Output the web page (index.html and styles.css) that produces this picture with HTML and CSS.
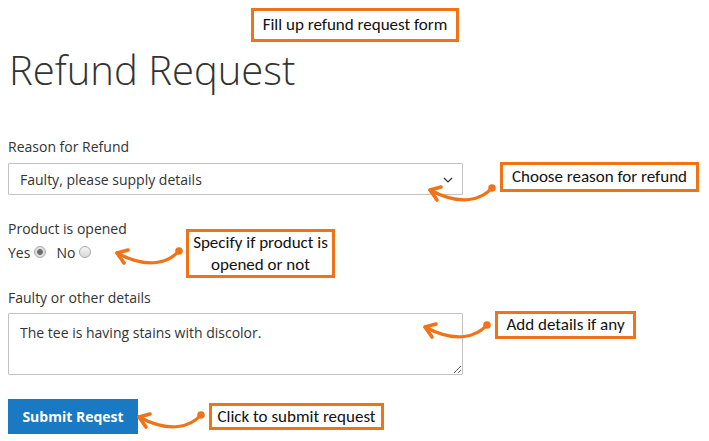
FILE: index.html
```html
<!DOCTYPE html>
<html lang="en">
<head>
    <meta charset="UTF-8">
    <meta name="viewport" content="width=device-width, initial-scale=1.0">
    <title>Refund Request</title>
    <link rel="stylesheet" href="styles.css">
</head>
<body>

    <div class="page">
        <h1 class="page-title">Refund Request</h1>

        <form class="refund-form">
            <label class="field-label" for="reason">Reason for Refund</label>
            <div class="select-wrap">
                <select id="reason" class="field-select">
                    <option>Faulty, please supply details</option>
                    <option>Wrong size</option>
                    <option>Changed my mind</option>
                </select>
                <svg class="select-arrow" width="10" height="6" viewBox="0 0 10 6">
                    <path d="M1 1 L5 5 L9 1" fill="none" stroke="#333" stroke-width="1.2"/>
                </svg>
            </div>

            <div class="field-label label-opened">Product is opened</div>
            <div class="radio-row">
                <label class="radio-item">Yes <input type="radio" name="opened" value="yes" checked></label>
                <label class="radio-item">No <input type="radio" name="opened" value="no"></label>
            </div>

            <label class="field-label label-details" for="details">Faulty or other details</label>
            <textarea id="details" class="field-textarea">The tee is having stains with discolor.</textarea>

            <button type="button" class="submit-btn">Submit Reqest</button>
        </form>

        <!-- annotation layer -->
        <div class="note note-top">Fill up refund request form</div>
        <div class="note note-reason">Choose reason for refund</div>
        <div class="note note-opened">Specify if product is<br>opened or not</div>
        <div class="note note-details">Add details if any</div>
        <div class="note note-submit">Click to submit request</div>

        <svg class="arrows" width="709" height="441" viewBox="0 0 709 441">
            <defs>
                <g id="arrow">
                    <path d="M0 0 C-10 11 -30 19 -62 2" fill="none" stroke="#f07318" stroke-width="3.2" stroke-linecap="round"/>
                    <path d="M-51 -1 L-62 2 L-55 12" fill="none" stroke="#f07318" stroke-width="3.6" stroke-linejoin="round" stroke-linecap="round"/>
                    <circle cx="0" cy="0" r="3.8" fill="#f07318"/>
                </g>
            </defs>
            <use href="#arrow" transform="translate(492 188)"/>
            <use href="#arrow" transform="translate(179 251)"/>
            <use href="#arrow" transform="translate(487 325)"/>
            <use href="#arrow" transform="translate(201 415)"/>
        </svg>
    </div>

</body>
</html>
```

FILE: styles.css
```css
/* page */
body {
    margin: 0;
    background-color: #ffffff;
    font-family: "Open Sans", "Liberation Sans", Arial, sans-serif;
    font-size: 14px;
    color: #333333;
}

.page {
    position: relative;
    width: 709px;
    height: 441px;
    padding: 45px 0 0 8px;
    box-sizing: border-box;
    overflow: hidden;
}

.page-title {
    margin: 0 0 0 1px;
    font-size: 40px;
    font-weight: 300;
    line-height: 50px;
    color: #333333;
}

/* form */
.refund-form {
    display: flex;
    flex-direction: column;
    align-items: flex-start;
    margin-top: 42px;
    width: 455px;
}

.field-label {
    line-height: 20px;
}

.select-wrap {
    position: relative;
    width: 100%;
    margin-top: 6px;
}

.field-select {
    appearance: none;
    -webkit-appearance: none;
    display: block;
    width: 100%;
    height: 32px;
    padding: 0 30px 0 11px;
    border: 1px solid #c2c2c2;
    border-radius: 1px;
    background-color: #ffffff;
    font-family: inherit;
    font-size: 14px;
    color: #333333;
}

.select-arrow {
    position: absolute;
    right: 10px;
    top: 14px;
}

.label-opened {
    margin-top: 24px;
}

.radio-row {
    display: flex;
    gap: 10px;
    margin-top: 4px;
    line-height: 20px;
}

.radio-item {
    display: flex;
    align-items: center;
    gap: 4px;
}

.radio-item input {
    appearance: none;
    -webkit-appearance: none;
    width: 12px;
    height: 12px;
    margin: 0;
    border: 1px solid #a9a9a9;
    border-radius: 50%;
    background: linear-gradient(#f4f4f4, #d9d9d9);
    position: relative;
    top: -1px;
}

.radio-item input:checked {
    background: radial-gradient(circle, #6d6d6d 0, #6d6d6d 2.6px, #e2e2e2 3.2px, #d4d4d4 100%);
}

.label-details {
    margin-top: 25px;
}

.field-textarea {
    display: block;
    width: 100%;
    height: 62px;
    margin-top: 5px;
    padding: 9px 11px;
    box-sizing: border-box;
    border: 1px solid #c2c2c2;
    border-radius: 1px;
    font-family: inherit;
    font-size: 14px;
    line-height: 20px;
    color: #333333;
}

.submit-btn {
    margin-top: 24px;
    width: 130px;
    height: 35px;
    padding: 0;
    border: none;
    border-radius: 0;
    background-color: #1979c3;
    color: #ffffff;
    font-family: inherit;
    font-size: 14px;
    font-weight: 700;
}

/* annotations */
.note {
    position: absolute;
    box-sizing: border-box;
    border: 3px solid #f07318;
    background-color: #ffffff;
    font-family: Carlito, Lato, "Liberation Sans", sans-serif;
    font-size: 17px;
    font-weight: 400;
    line-height: 22px;
    color: #111111;
    text-align: center;
    display: flex;
    align-items: center;
    justify-content: center;
}

.note-top {
    left: 251px;
    top: 8px;
    width: 208px;
    height: 34px;
}

.note-reason {
    left: 500px;
    top: 162px;
    width: 199px;
    height: 30px;
}

.note-opened {
    left: 186px;
    top: 229px;
    width: 149px;
    height: 49px;
}

.note-details {
    left: 495px;
    top: 311px;
    width: 141px;
    height: 28px;
}

.note-submit {
    left: 209px;
    top: 403px;
    width: 175px;
    height: 27px;
}

.arrows {
    position: absolute;
    left: 0;
    top: 0;
    pointer-events: none;
}
```
